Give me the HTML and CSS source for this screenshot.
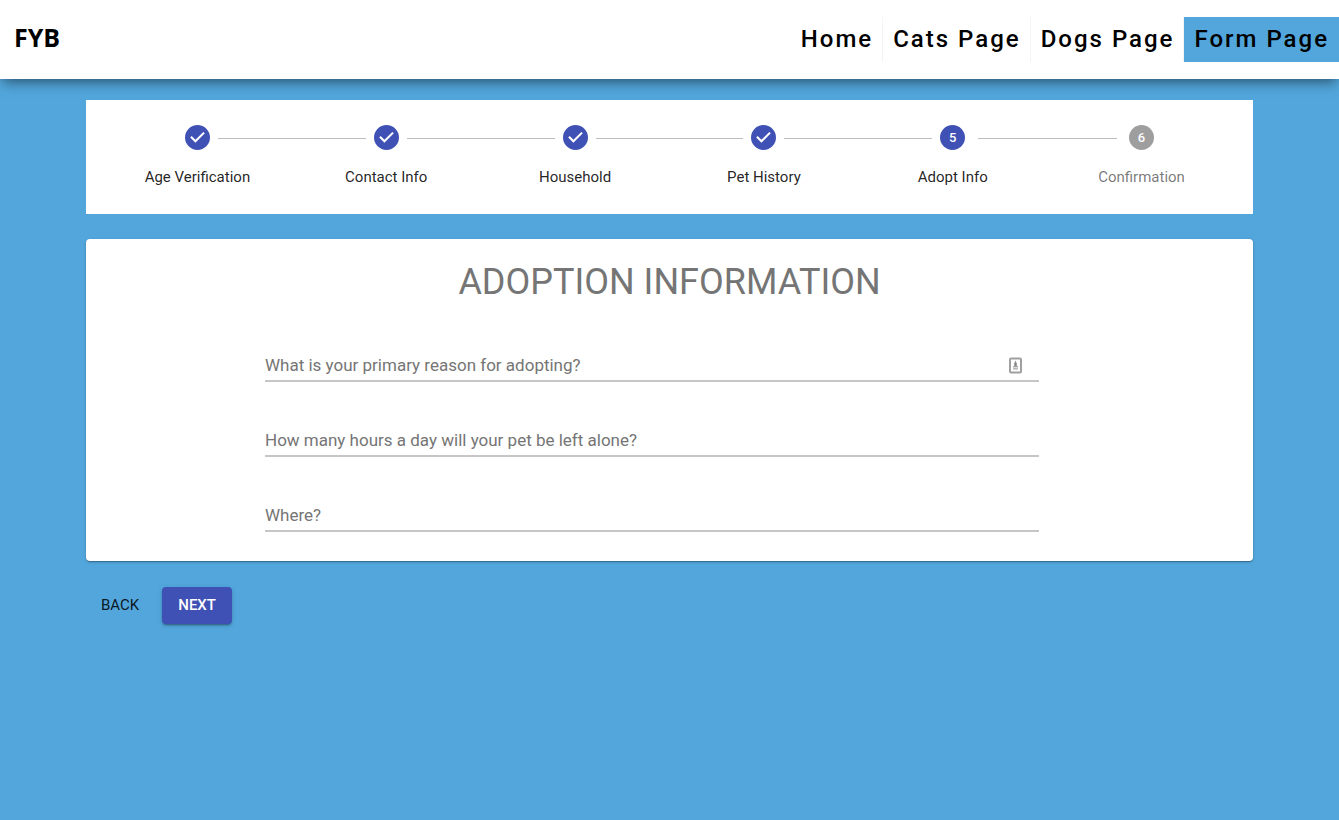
FILE: index.html
```html
<!DOCTYPE html>
<html lang="en">
<head>
<meta charset="utf-8">
<meta name="viewport" content="width=device-width, initial-scale=1">
<title>FYB - Form Page</title>
<link rel="stylesheet" href="styles.css">
</head>
<body>
<header class="site-header">
  <a class="brand" href="#">FYB</a>
  <nav class="site-nav">
    <a class="nav-link" href="#">Home</a>
    <a class="nav-link" href="#">Cats Page</a>
    <a class="nav-link" href="#">Dogs Page</a>
    <a class="nav-link active" href="#" aria-current="page">Form Page</a>
  </nav>
</header>
<main class="page">
  <ol class="stepper">
    <li class="step">
      <div class="step-track"><svg class="step-icon" viewBox="0 0 24 24" aria-hidden="true"><path d="M12 0a12 12 0 1 0 0 24 12 12 0 0 0 0-24zm-2 17l-5-5 1.4-1.4 3.6 3.6 7.6-7.6L19 8l-9 9z"/></svg></div>
      <span class="step-label">Age Verification</span>
    </li>
    <li class="step">
      <div class="step-track"><svg class="step-icon" viewBox="0 0 24 24" aria-hidden="true"><path d="M12 0a12 12 0 1 0 0 24 12 12 0 0 0 0-24zm-2 17l-5-5 1.4-1.4 3.6 3.6 7.6-7.6L19 8l-9 9z"/></svg></div>
      <span class="step-label">Contact Info</span>
    </li>
    <li class="step">
      <div class="step-track"><svg class="step-icon" viewBox="0 0 24 24" aria-hidden="true"><path d="M12 0a12 12 0 1 0 0 24 12 12 0 0 0 0-24zm-2 17l-5-5 1.4-1.4 3.6 3.6 7.6-7.6L19 8l-9 9z"/></svg></div>
      <span class="step-label">Household</span>
    </li>
    <li class="step">
      <div class="step-track"><svg class="step-icon" viewBox="0 0 24 24" aria-hidden="true"><path d="M12 0a12 12 0 1 0 0 24 12 12 0 0 0 0-24zm-2 17l-5-5 1.4-1.4 3.6 3.6 7.6-7.6L19 8l-9 9z"/></svg></div>
      <span class="step-label">Pet History</span>
    </li>
    <li class="step current" aria-current="step">
      <div class="step-track"><span class="step-number">5</span></div>
      <span class="step-label">Adopt Info</span>
    </li>
    <li class="step pending">
      <div class="step-track"><span class="step-number">6</span></div>
      <span class="step-label">Confirmation</span>
    </li>
  </ol>
  <form class="adoption-form">
    <section class="card">
      <h1 class="card-title">ADOPTION INFORMATION</h1>
      <div class="fields">
        <div class="field">
          <label class="field-label" for="reason">What is your primary reason for adopting?</label>
          <input class="field-input" id="reason" type="text">
          <svg class="autofill-icon" viewBox="0 0 14 17" aria-hidden="true"><rect x="2" y="1.500" width="11" height="14" rx="1" fill="#fff" stroke="#a0a0a0" stroke-width="2"/><path d="M7.500 3.500l1.300 3v2.500H6.200V6.500z" fill="#888"/><path d="M5 9h5v1.500H5z" fill="#a8a8a8"/><path d="M5 11.200h5v1.300H5z" fill="#aaa"/></svg>
        </div>
        <div class="field">
          <label class="field-label" for="hours">How many hours a day will your pet be left alone?</label>
          <input class="field-input" id="hours" type="text">
        </div>
        <div class="field">
          <label class="field-label" for="where">Where?</label>
          <input class="field-input" id="where" type="text">
        </div>
      </div>
    </section>
    <div class="actions">
      <button class="button" type="button">BACK</button>
      <button class="button primary" type="button">NEXT</button>
    </div>
  </form>
</main>
</body>
</html>
```
FILE: styles.css
```css
* {
  box-sizing: border-box;
}

body {
  margin: 0;
  min-height: 100vh;
  background: #52a6db;
  font-family: Roboto, "Liberation Sans", sans-serif;
  color: #000;
}

.site-header {
  position: relative;
  display: flex;
  align-items: flex-start;
  justify-content: space-between;
  padding: 17px 0;
  background: #fff;
  box-shadow: 0 6px 12px -3px rgba(0, 0, 0, 0.5);
}

.brand {
  padding-left: 14px;
  color: #000;
  font-family: "Open Sans", sans-serif;
  font-size: 25px;
  font-weight: 700;
  line-height: 40px;
  text-decoration: none;
}

.site-nav {
  display: flex;
}

.nav-link {
  padding: 0 9px 0 10px;
  border-right: 1px solid #f4f4f4;
  color: #000;
  font-size: 24px;
  font-weight: 500;
  line-height: 45px;
  letter-spacing: 2px;
  text-decoration: none;
}

.nav-link.active {
  border-right-color: #52a6db;
  background: #52a6db;
}

.page {
  padding: 21px 86px;
}

.stepper {
  display: flex;
  margin: 0;
  padding: 25px 17px;
  background: #fff;
  list-style: none;
}

.step {
  flex: 1;
  text-align: center;
}

.step-track {
  display: grid;
  grid-template-columns: 1fr 25px 1fr;
  align-items: center;
  column-gap: 8px;
  height: 26px;
}

.step-track::before,
.step-track::after {
  content: "";
  border-top: 1px solid #bdbdbd;
}

.step:first-child .step-track::before,
.step:last-child .step-track::after {
  border-color: transparent;
}

.current .step-track::after {
  margin-left: 5px;
}

.pending .step-track::before {
  margin-right: 4px;
}

.step-icon,
.step-number {
  align-self: start;
  width: 25px;
  height: 25px;
}

.step-icon {
  fill: #3f51b5;
}

.step-number {
  border-radius: 50%;
  background: #3f51b5;
  color: #fff;
  font-size: 13px;
  font-weight: 500;
  line-height: 25px;
}

.pending .step-number {
  background: #9e9e9e;
}

.step-label {
  display: block;
  margin-top: 15px;
  padding-bottom: 1px;
  font-size: 15px;
  line-height: 22px;
  color: rgba(0, 0, 0, 0.87);
}

.pending .step-label {
  color: rgba(0, 0, 0, 0.54);
}

.card {
  margin-top: 25px;
  padding: 21px 0 29px;
  border-radius: 4px;
  background: #fff;
  box-shadow: 0 1px 3px rgba(0, 0, 0, 0.2), 0 1px 1px rgba(0, 0, 0, 0.14), 0 2px 1px -1px rgba(0, 0, 0, 0.12);
}

.card-title {
  margin: 0;
  color: #757575;
  font-size: 36px;
  font-weight: 400;
  line-height: 44px;
  text-align: center;
}

.fields {
  display: grid;
  gap: 42px;
  margin: 45px 214px 0 179px;
}

.field {
  display: grid;
  position: relative;
}

.field-label,
.field-input {
  grid-area: 1 / 1;
  font-size: 17px;
}

.field-label {
  color: #757575;
  line-height: 32px;
}

.field-input {
  width: 100%;
  height: 33px;
  padding: 0 40px 0 0;
  border: 0;
  border-bottom: 2px solid #c6c6c6;
  background: transparent;
  color: #212121;
  font-family: inherit;
}

.autofill-icon {
  position: absolute;
  top: 8px;
  right: 17px;
  width: 14px;
  height: 17px;
}

.actions {
  display: flex;
  gap: 8px;
  margin-top: 26px;
}

.button {
  padding: 0 15px;
  border: 0;
  border-radius: 4px;
  background: transparent;
  color: rgba(0, 0, 0, 0.87);
  font-family: inherit;
  font-size: 15px;
  font-weight: 400;
  line-height: 37px;
}

.primary {
  padding: 0 16px;
  background: #3f51b5;
  color: #fff;
  font-weight: 500;
  box-shadow: 0 3px 1px -2px rgba(0, 0, 0, 0.2), 0 2px 2px rgba(0, 0, 0, 0.14), 0 1px 5px rgba(0, 0, 0, 0.12);
}
```
